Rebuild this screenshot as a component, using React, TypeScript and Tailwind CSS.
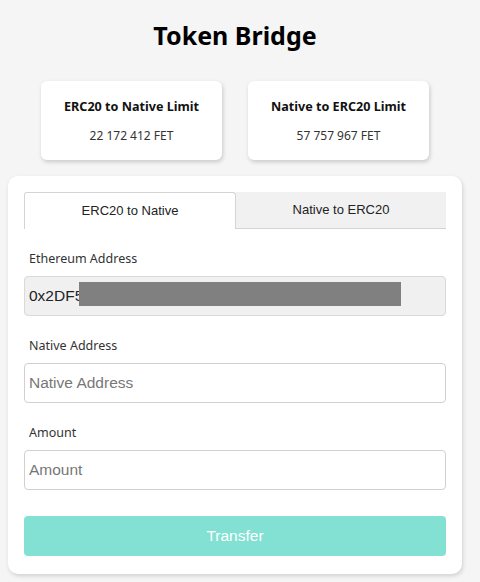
const ui = '"Noto Sans", "Open Sans", sans-serif';

function Limit({ title, value }: { title: string; value: string }) {
  return (
    <div className="flex h-[79px] w-[181px] flex-col items-center rounded-[6px] bg-white pt-[17px] shadow-[1px_2px_4px_rgba(0,0,0,0.18)]">
      <div className="text-[12.6px] font-bold leading-[18px] text-[#111]">{title}</div>
      <div className="mt-[12px] text-[12px] leading-[16px] text-[#333]">{value}</div>
    </div>
  );
}

function Field({ label, children }: { label: string; children: React.ReactNode }) {
  return (
    <div className="mt-[21px]">
      <div className="pl-[5px] text-[12.5px] leading-[18px] text-[#333]">{label}</div>
      <div className="mt-[8px]">{children}</div>
    </div>
  );
}

export default function App() {
  return (
    <div className="min-h-screen bg-[#f5f5f5]" style={{ fontFamily: ui }}>
      <div className="flex w-[470px] flex-col items-center">
        <h1 className="pt-[18px] text-[25px] font-bold leading-[34px] text-black">Token Bridge</h1>

        <div className="mt-[29px] flex gap-[26px]">
          <Limit title="ERC20 to Native Limit" value="22 172 412 FET" />
          <Limit title="Native to ERC20 Limit" value="57 757 967 FET" />
        </div>

        <div className="mt-[16px] w-[454px] rounded-[10px] bg-white px-[16px] pb-[18px] pt-[16px] shadow-[1px_2px_4px_rgba(0,0,0,0.15)]">
          <div className="flex h-[37px] font-['Liberation_Sans',Arial,sans-serif] text-[13px] text-[#222]">
            <div className="flex w-[212px] items-center justify-center rounded-t-[3px] border border-b-0 border-[#d4d4d4] bg-white">
              ERC20 to Native
            </div>
            <div className="flex flex-1 items-center justify-center border-b border-[#d4d4d4] bg-[#f1f1f1]">
              Native to ERC20
            </div>
          </div>

          <Field label="Ethereum Address">
            <div className="relative flex h-[40px] items-center rounded-[4px] border border-[#d9d9d9] bg-[#f0f0f0] pl-[4px] font-['Liberation_Sans',Arial,sans-serif] text-[15.5px] text-[#222]">
              0x2DF5
              <div className="absolute left-[54px] top-[5px] h-[24px] w-[322px] bg-[#808080]" />
            </div>
          </Field>

          <Field label="Native Address">
            <input
              placeholder="Native Address"
              className="h-[40px] w-full rounded-[4px] border border-[#d0d0d0] bg-white pl-[4px] font-['Liberation_Sans',Arial,sans-serif] text-[15.5px] text-[#222] outline-none placeholder:text-[#777]"
            />
          </Field>

          <Field label="Amount">
            <input
              placeholder="Amount"
              className="h-[40px] w-full rounded-[4px] border border-[#d0d0d0] bg-white pl-[4px] font-['Liberation_Sans',Arial,sans-serif] text-[15.5px] text-[#222] outline-none placeholder:text-[#777]"
            />
          </Field>

          <button className="mt-[26px] h-[40px] w-full rounded-[4px] bg-[#82e1d2] font-['Liberation_Sans',Arial,sans-serif] text-[15.5px] text-white">
            Transfer
          </button>
        </div>
      </div>
    </div>
  );
}
